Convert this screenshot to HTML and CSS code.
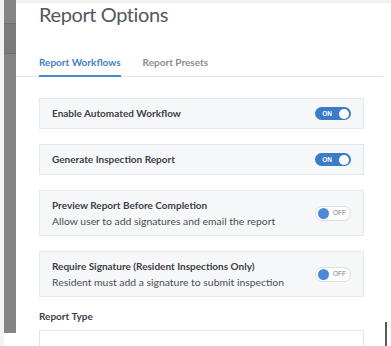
FILE: index.html
```html
<!DOCTYPE html>
<html>
<head>
<meta charset="utf-8">
<link rel="stylesheet" href="styles.css">
</head>
<body>
<div class="app">
  <div class="edge"></div>
  <div class="rail">
    <div class="rail-seg seg1"></div>
    <div class="rail-seg seg2"></div>
    <div class="rail-seg seg3"></div>
  </div>
  <div class="panel">
    <h1 class="title">Report Options</h1>
    <div class="tabs">
      <div class="tab active">Report Workflows</div>
      <div class="tab">Report Presets</div>
    </div>
    <div class="content">
      <div class="card">
        <div class="card-text"><div class="card-title">Enable Automated Workflow</div></div>
        <div class="toggle on"><span class="tlabel">ON</span><span class="knob"></span></div>
      </div>
      <div class="card">
        <div class="card-text"><div class="card-title">Generate Inspection Report</div></div>
        <div class="toggle on"><span class="tlabel">ON</span><span class="knob"></span></div>
      </div>
      <div class="card tall">
        <div class="card-text">
          <div class="card-title">Preview Report Before Completion</div>
          <div class="card-sub">Allow user to add signatures and email the report</div>
        </div>
        <div class="toggle off"><span class="knob"></span><span class="tlabel">OFF</span></div>
      </div>
      <div class="card tall">
        <div class="card-text">
          <div class="card-title">Require Signature (Resident Inspections Only)</div>
          <div class="card-sub">Resident must add a signature to submit inspection</div>
        </div>
        <div class="toggle off"><span class="knob"></span><span class="tlabel">OFF</span></div>
      </div>
      <div class="field-label">Report Type</div>
      <div class="select"></div>
    </div>
  </div>
</div>
<div class="cursor"></div>
</body>
</html>
```
FILE: styles.css
```css
html, body {
  margin: 0;
  padding: 0;
  background: #ffffff;
  width: 391px;
  height: 346px;
  overflow: hidden;
  font-family: Lato, "Open Sans", sans-serif;
}
.app {
  display: flex;
  height: 346px;
  border-top: 3px solid #f1f1f2;
  box-sizing: border-box;
}
.edge {
  width: 4px;
  background: #f2f2f2;
}
.rail {
  width: 12px;
  height: 333px;
  display: flex;
  flex-direction: column;
  margin-top: -3px;
}
.rail-seg { background: #7f7f7f; }
.seg1 { height: 23px; background: #858585; border-bottom: 1px solid #6e6e6e; }
.seg2 { height: 29px; background: #7a7a7a; border-bottom: 1px solid #6e6e6e; }
.seg3 { flex: 1; background: #838383; }
.panel {
  flex: 1;
  display: flex;
  flex-direction: column;
}
.title {
  margin: -1px 0 0 0;
  padding: 0 0 0 23px;
  font-weight: 400;
  font-size: 20px;
  letter-spacing: -0.4px;
  line-height: 24px;
  color: #54575c;
}
.tabs {
  display: flex;
  gap: 22px;
  margin-top: 30px;
  margin-right: 8px;
  padding-left: 23px;
  border-bottom: 1px solid #e4e5e7;
}
.tab {
  font-size: 10px;
  font-weight: 700;
  color: #8a8c90;
  padding-bottom: 7px;
  line-height: 12px;
}
.tab.active {
  color: #3f7fc7;
  border-bottom: 2px solid #4a88cc;
  margin-bottom: -1px;
}
.content {
  display: flex;
  flex-direction: column;
  gap: 15px;
  padding: 21px 27px 0 23px;
}
.card {
  display: flex;
  align-items: center;
  justify-content: space-between;
  background: #f6f7f9;
  border: 1px solid #e7e8ea;
  height: 31px;
  box-sizing: border-box;
  padding: 0 12px 0 12px;
}
.card.tall {
  height: 46px;
}
.card-title {
  font-size: 10px;
  font-weight: 700;
  color: #3e4146;
  line-height: 13px;
}
.card-sub {
  font-size: 10.4px;
  color: #4a4d52;
  line-height: 14px;
  margin-top: 2px;
}
.toggle {
  width: 36px;
  height: 13px;
  border-radius: 7px;
  box-sizing: border-box;
  display: flex;
  align-items: center;
  padding: 0 2px;
  gap: 4px;
}
.toggle.on {
  background: #3b7cc9;
  justify-content: flex-end;
}
.toggle.off {
  background: #ffffff;
  border: 1px solid #dcdee1;
  height: 15px;
  padding: 0 2px;
}
.knob {
  width: 10px;
  height: 10px;
  border-radius: 50%;
  background: #ffffff;
}
.toggle.off .knob {
  background: #4a8ad8;
  width: 11px;
  height: 11px;
}
.tlabel {
  font-size: 6.5px;
  font-weight: 700;
  color: #ffffff;
  line-height: 8px;
  font-family: "Liberation Sans", sans-serif;
}
.toggle.on .tlabel { margin-right: 3px; }
.toggle.off .tlabel { color: #7a7c80; font-weight: 400; }
.field-label {
  font-size: 10px;
  font-weight: 700;
  color: #3e4146;
  line-height: 12px;
  margin-top: -2px;
}
.select {
  height: 20px;
  border: 1px solid #e3e4e6;
  border-bottom: none;
  margin-top: -7px;
}
.cursor {
  position: absolute;
  left: 385px;
  top: 322px;
  width: 2px;
  height: 24px;
  background: #5a5a5a;
}
```
